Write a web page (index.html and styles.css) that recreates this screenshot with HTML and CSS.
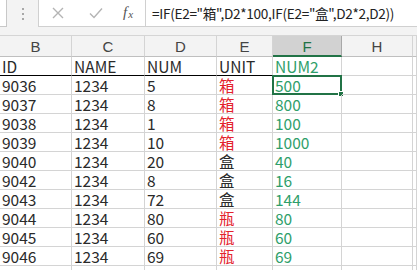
FILE: index.html
```html
<!DOCTYPE html>
<html>
<head>
<meta charset="utf-8">
<link rel="stylesheet" href="styles.css">
</head>
<body>
<div class="toolbar">
  <div class="namebox"></div>
  <div class="grip"><span></span><span></span><span></span></div>
  <div class="buttons">
    <span class="btn cancel">
      <svg width="12" height="12" viewBox="0 0 12 12"><path d="M1 1L11 11M11 1L1 11" stroke="#b4b4b4" stroke-width="1.4" fill="none"/></svg>
    </span>
    <span class="btn enter">
      <svg width="14" height="12" viewBox="0 0 14 12"><path d="M1 6.5L5 10.5L13 1.5" stroke="#b4b4b4" stroke-width="1.4" fill="none"/></svg>
    </span>
    <span class="btn fx"><i>f</i><i class="x">x</i></span>
  </div>
  <div class="formula">=IF(E2="箱",D2*100,IF(E2="盒",D2*2,D2))</div>
</div>
<div class="sheet">
  <div class="hd">B</div><div class="hd">C</div><div class="hd">D</div><div class="hd">E</div><div class="hd sel">F</div><div class="hd">H</div><div class="hd"></div>

  <div class="c top">ID</div><div class="c top">NAME</div><div class="c top">NUM</div><div class="c top">UNIT</div><div class="c g">NUM2</div><div class="c"></div><div class="c"></div>

  <div class="c">9036</div><div class="c">1234</div><div class="c">5</div><div class="c r">箱</div><div class="c g active">500<span class="handle"></span></div><div class="c"></div><div class="c"></div>
  <div class="c">9037</div><div class="c">1234</div><div class="c">8</div><div class="c r">箱</div><div class="c g">800</div><div class="c"></div><div class="c"></div>
  <div class="c">9038</div><div class="c">1234</div><div class="c">1</div><div class="c r">箱</div><div class="c g">100</div><div class="c"></div><div class="c"></div>
  <div class="c">9039</div><div class="c">1234</div><div class="c">10</div><div class="c r">箱</div><div class="c g">1000</div><div class="c"></div><div class="c"></div>
  <div class="c">9040</div><div class="c">1234</div><div class="c">20</div><div class="c">盒</div><div class="c g">40</div><div class="c"></div><div class="c"></div>
  <div class="c">9042</div><div class="c">1234</div><div class="c">8</div><div class="c">盒</div><div class="c g">16</div><div class="c"></div><div class="c"></div>
  <div class="c">9043</div><div class="c">1234</div><div class="c">72</div><div class="c">盒</div><div class="c g">144</div><div class="c"></div><div class="c"></div>
  <div class="c">9044</div><div class="c">1234</div><div class="c">80</div><div class="c r">瓶</div><div class="c g">80</div><div class="c"></div><div class="c"></div>
  <div class="c">9045</div><div class="c">1234</div><div class="c">60</div><div class="c r">瓶</div><div class="c g">60</div><div class="c"></div><div class="c"></div>
  <div class="c">9046</div><div class="c">1234</div><div class="c">69</div><div class="c r">瓶</div><div class="c g">69</div><div class="c"></div><div class="c"></div>
  <div class="c"></div><div class="c"></div><div class="c"></div><div class="c"></div><div class="c"></div><div class="c"></div><div class="c"></div>
</div>
</body>
</html>
```
FILE: styles.css
```css
* { box-sizing: border-box; }
html, body { margin: 0; padding: 0; }
body {
  width: 417px;
  height: 270px;
  overflow: hidden;
  background: #fff;
  font-family: "Noto Sans CJK SC", "Noto Sans", sans-serif;
}
.toolbar {
  display: flex;
  height: 36px;
  background: #f3f3f3;
  border-bottom: 1px solid #d5d5d5;
  padding-bottom: 8px;
}
.namebox {
  width: 7px;
  background: #fff;
  border-right: 1px solid #c8c8c8;
  border-bottom: 1px solid #c8c8c8;
}
.grip {
  width: 31px;
  display: flex;
  flex-direction: column;
  align-items: center;
  justify-content: center;
  gap: 3px;
  padding-top: 1px;
}
.grip span {
  width: 2px;
  height: 2px;
  background: #a8a8a8;
}
.buttons {
  width: 108px;
  background: #fff;
  border-left: 1px solid #d0d0d0;
  border-right: 1px solid #d0d0d0;
  border-bottom: 1px solid #d0d0d0;
  display: flex;
  align-items: center;
}
.btn {
  display: flex;
  align-items: center;
  justify-content: center;
}
.cancel { width: 38px; }
.enter { width: 38px; }
.fx {
  width: 26px;
  font-family: "Liberation Serif", serif;
  font-size: 15px;
  color: #555;
  padding-bottom: 2px;
}
.fx i { font-style: italic; }
.fx .x { font-size: 11px; margin-left: 1px; margin-top: 4px; }
.formula {
  flex: 1;
  background: #fff;
  border-bottom: 1px solid #d0d0d0;
  padding-left: 6px;
  font-size: 13.6px;
  letter-spacing: -0.3px;
  line-height: 27px;
  color: #222;
  white-space: nowrap;
  overflow: hidden;
}
.sheet {
  display: grid;
  grid-template-columns: 72px 73px 72px 56px 69px 71px 1fr;
  grid-auto-rows: 19px;
  grid-template-rows: 21px;
}
.hd {
  background: #f3f3f3;
  border-right: 1px solid #d4d4d4;
  border-bottom: 1px solid #bfbfbf;
  color: #444;
  font-family: "Liberation Sans", "Noto Sans", sans-serif;
  font-size: 15px;
  text-align: center;
  line-height: 21px;
}
.hd.sel {
  background: #d2d2d2;
  color: #217346;
  border-bottom: 2px solid #217346;
  border-right-color: #a8a8a8;
}
.c {
  position: relative;
  border-right: 1px solid #d4d4d4;
  border-bottom: 1px solid #d4d4d4;
  font-size: 15.5px;
  line-height: 19px;
  padding-left: 2px;
  color: #2a2a2a;
  white-space: nowrap;
}
.c.top { border-bottom-color: #000; }
.c.r { color: #e3222c; }
.c.g { color: #2e9e6a; }
.c.active {
  border: 2px solid #217346;
  margin: -1px 0 0 -1px;
  padding-left: 1px;
  line-height: 16px;
}
.handle {
  position: absolute;
  right: -4px;
  bottom: -4px;
  width: 6px;
  height: 6px;
  background: #217346;
  border: 1px solid #fff;
}
```
